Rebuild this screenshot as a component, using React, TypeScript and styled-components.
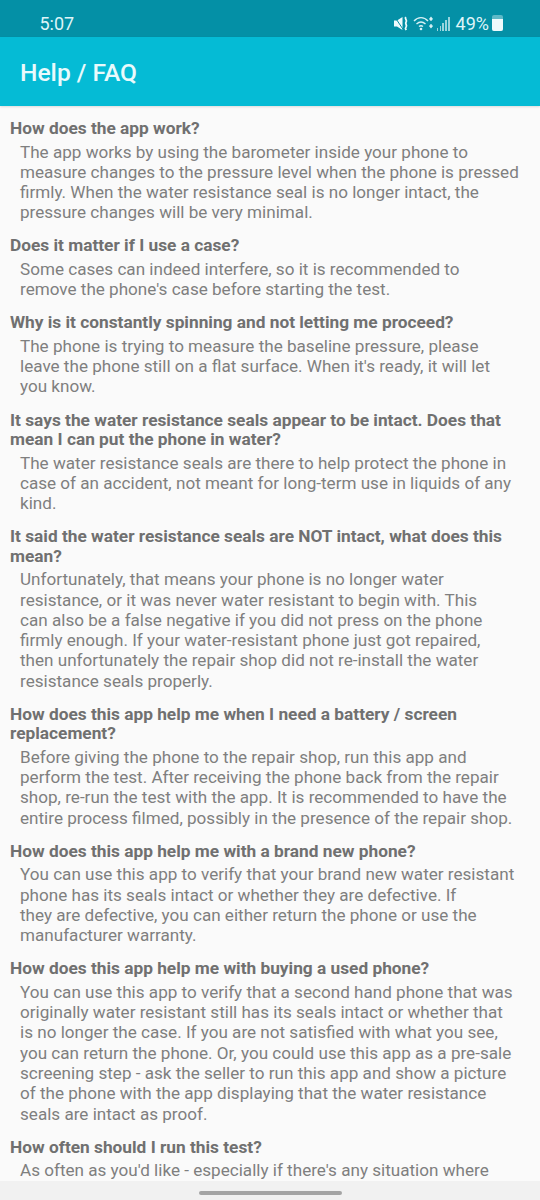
import React from "react";
import styled, { createGlobalStyle } from "styled-components";

interface Faq {
  question: string[];
  answer: string[];
}

const faqs: Faq[] = [
  {
    question: ["How does the app work?"],
    answer: [
      "The app works by using the barometer inside your phone to",
      "measure changes to the pressure level when the phone is pressed",
      "firmly. When the water resistance seal is no longer intact, the",
      "pressure changes will be very minimal.",
    ],
  },
  {
    question: ["Does it matter if I use a case?"],
    answer: [
      "Some cases can indeed interfere, so it is recommended to",
      "remove the phone's case before starting the test.",
    ],
  },
  {
    question: ["Why is it constantly spinning and not letting me proceed?"],
    answer: [
      "The phone is trying to measure the baseline pressure, please",
      "leave the phone still on a flat surface. When it's ready, it will let",
      "you know.",
    ],
  },
  {
    question: [
      "It says the water resistance seals appear to be intact. Does that",
      "mean I can put the phone in water?",
    ],
    answer: [
      "The water resistance seals are there to help protect the phone in",
      "case of an accident, not meant for long-term use in liquids of any",
      "kind.",
    ],
  },
  {
    question: [
      "It said the water resistance seals are NOT intact, what does this",
      "mean?",
    ],
    answer: [
      "Unfortunately, that means your phone is no longer water",
      "resistance, or it was never water resistant to begin with. This",
      "can also be a false negative if you did not press on the phone",
      "firmly enough. If your water-resistant phone just got repaired,",
      "then unfortunately the repair shop did not re-install the water",
      "resistance seals properly.",
    ],
  },
  {
    question: [
      "How does this app help me when I need a battery / screen",
      "replacement?",
    ],
    answer: [
      "Before giving the phone to the repair shop, run this app and",
      "perform the test. After receiving the phone back from the repair",
      "shop, re-run the test with the app. It is recommended to have the",
      "entire process filmed, possibly in the presence of the repair shop.",
    ],
  },
  {
    question: ["How does this app help me with a brand new phone?"],
    answer: [
      "You can use this app to verify that your brand new water resistant",
      "phone has its seals intact or whether they are defective. If",
      "they are defective, you can either return the phone or use the",
      "manufacturer warranty.",
    ],
  },
  {
    question: ["How does this app help me with buying a used phone?"],
    answer: [
      "You can use this app to verify that a second hand phone that was",
      "originally water resistant still has its seals intact or whether that",
      "is no longer the case. If you are not satisfied with what you see,",
      "you can return the phone. Or, you could use this app as a pre-sale",
      "screening step - ask the seller to run this app and show a picture",
      "of the phone with the app displaying that the water resistance",
      "seals are intact as proof.",
    ],
  },
  {
    question: ["How often should I run this test?"],
    answer: [
      "As often as you'd like - especially if there's any situation where",
    ],
  },
];

const App: React.FC = () => {
  return (
    <Screen>
      <GlobalStyle />
      <StatusBar>
        <Clock>5:07</Clock>
        <StatusIcons>
          <svg width="18" height="17" viewBox="0 0 18 17">
            <path d="M2 5.500h3L10.500 2v13L5 11.500H2z" fill="#eefafc" />
            <path d="M2.500 1.500l9 13.500" stroke="#0490a6" strokeWidth="1" />
            <path
              d="M13.800 2c-1.500 2 1.800 3 .3 5s1.500 3 0 5 -.3 2 .2 3"
              stroke="#eefafc"
              strokeWidth="1.800"
              fill="none"
            />
          </svg>
          <WifiIcon width="21" height="17" viewBox="0 0 21 17">
            <path
              d="M1 6c4-4.500 10-4.500 14 0M3.500 9c3-2.800 6-2.800 9 0M6 11.500c1.500-1.200 2.500-1.200 4 0"
              stroke="#d8f1f5"
              strokeWidth="1.400"
              fill="none"
            />
            <circle cx="8" cy="14" r="1.300" fill="#d8f1f5" />
            <path
              d="M18 3v3M18 9v3M16.500 10.500L18 12.500l1.500-2M16.500 4.500L18 2.500l1.500 2"
              stroke="#d8f1f5"
              strokeWidth="1.300"
              fill="none"
            />
          </WifiIcon>
          <Signal>
            {[3, 5, 8, 11, 14].map((h) => (
              <SignalBar key={h} $h={h} />
            ))}
          </Signal>
          <Percent>49%</Percent>
          <Battery>
            <BatteryFill />
          </Battery>
        </StatusIcons>
      </StatusBar>
      <AppBar>
        <Title>Help / FAQ</Title>
      </AppBar>
      <Content>
        {faqs.map((faq) => (
          <Entry key={faq.question[0]}>
            <Question>
              {faq.question.map((line) => (
                <Line key={line}>{line}</Line>
              ))}
            </Question>
            <Answer>
              {faq.answer.map((line) => (
                <Line key={line}>{line}</Line>
              ))}
            </Answer>
          </Entry>
        ))}
      </Content>
      <NavBar>
        <NavPill />
      </NavBar>
    </Screen>
  );
};

export default App;

const GlobalStyle = createGlobalStyle`
  html, body {
    margin: 0;
    padding: 0;
    background: #fafafa;
  }
`;

const Screen = styled.div`
  width: 540px;
  height: 1200px;
  display: flex;
  flex-direction: column;
  overflow: hidden;
  background: #fafafa;
  font-family: Roboto, "Liberation Sans", sans-serif;
`;

const StatusBar = styled.div`
  height: 37px;
  box-sizing: border-box;
  flex: none;
  display: flex;
  align-items: center;
  justify-content: space-between;
  padding: 9px 37px 0 39.5px;
  background: #0490a6;
  color: #dff5f8;
`;

const Clock = styled.span`
  font-size: 18px;
`;

const StatusIcons = styled.div`
  display: flex;
  align-items: center;
`;

const WifiIcon = styled.svg`
  margin-left: 3px;
`;

const Signal = styled.div`
  display: flex;
  align-items: flex-end;
  gap: 1.3px;
  height: 15px;
  margin-left: 3px;
  opacity: 0.7;
`;

const SignalBar = styled.div<{ $h: number }>`
  width: 1.5px;
  height: ${(p) => p.$h}px;
  background: #d8f1f5;
`;

const Percent = styled.span`
  font-size: 18px;
  margin-left: 6px;
`;

const Battery = styled.div`
  width: 11px;
  height: 16px;
  display: flex;
  align-items: flex-end;
  border-radius: 2px;
  background: rgba(230, 247, 250, 0.4);
  margin-left: 3px;
`;

const BatteryFill = styled.div`
  width: 100%;
  height: 12px;
  border-radius: 0 0 2px 2px;
  background: #eefafc;
`;

const AppBar = styled.div`
  height: 69px;
  flex: none;
  display: flex;
  align-items: center;
  padding: 2px 20px 0;
  box-sizing: border-box;
  background: #05bbd5;
  box-shadow: 0 1px 2px rgba(0, 0, 0, 0.12);
  position: relative;
`;

const Title = styled.h1`
  margin: 0;
  font-size: 24.6px;
  font-weight: 500;
  color: #e9fafc;
`;

const Content = styled.div`
  flex: 1;
  min-height: 0;
  overflow: hidden;
  padding: 13px 10px 0;
  display: flex;
  flex-direction: column;
  gap: 13.8px;
`;

const Entry = styled.section`
  flex: none;
`;

const Question = styled.div`
  font-size: 17.3px;
  font-weight: 700;
  line-height: 19.5px;
  color: #707070;
`;

const Answer = styled.div`
  margin-top: 3px;
  padding-left: 10px;
  font-size: 17.1px;
  line-height: 20.3px;
  color: #7f7f7f;
`;

const Line = styled.div`
  white-space: nowrap;
`;

const NavBar = styled.div`
  height: 19px;
  flex: none;
  display: flex;
  align-items: center;
  justify-content: center;
  background: #f1f1f1;
`;

const NavPill = styled.div`
  width: 143px;
  height: 4px;
  margin-top: 5px;
  margin-left: 1px;
  border-radius: 2px;
  background: #a4a4a4;
`;
